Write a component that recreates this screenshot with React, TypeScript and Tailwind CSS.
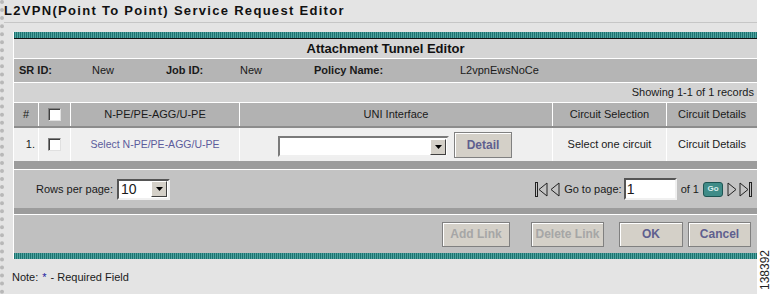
import React from "react";

const teal =
  "h-[6px] bg-[repeating-linear-gradient(90deg,#1d7370_0px,#1d7370_1px,#4fa3a0_1px,#4fa3a0_2px)]";

function Check() {
  return (
    <div className="w-[13px] h-[13px] bg-white border border-t-[#808080] border-l-[#808080] border-b-[#e0e0e0] border-r-[#e0e0e0] shadow-[inset_1px_1px_0_#404040]" />
  );
}

function DropBtn() {
  return (
    <div className="w-[16px] h-[16px] bg-[#d4d0c8] border border-t-white border-l-white border-b-[#404040] border-r-[#404040] flex items-center justify-center">
      <svg width="7" height="4" viewBox="0 0 7 4">
        <path d="M0 0h7L3.5 4z" fill="#000" />
      </svg>
    </div>
  );
}

function Btn({ label, on, w }: { label: string; on?: boolean; w: string }) {
  return (
    <div
      className={`${w} h-[25px] bg-[#d4d0c8] border border-[#808080] shadow-[inset_1px_1px_0_#ffffff] flex items-center justify-center font-bold text-[12px] ${
        on ? "text-[#5f5f8f]" : "text-[#a6a6a6]"
      }`}
    >
      {label}
    </div>
  );
}

function Tri({ dir, bar }: { dir: "l" | "r"; bar?: boolean }) {
  return (
    <svg width={bar ? 13 : 10} height="15" viewBox={bar ? "0 0 13 15" : "0 0 10 15"}>
      {dir === "l" ? (
        <>
          {bar && <rect x="0.5" y="0.5" width="2" height="14" fill="none" stroke="#222" />}
          <path d={bar ? "M12 1L4 7.5l8 6.5z" : "M9 1L1 7.5l8 6.5z"} fill="none" stroke="#222" />
        </>
      ) : (
        <>
          <path d="M1 1l8 6.5-8 6.5z" fill="none" stroke="#222" />
          {bar && <rect x="10.5" y="0.5" width="2" height="14" fill="none" stroke="#222" />}
        </>
      )}
    </svg>
  );
}

export default function App() {
  return (
    <div className="w-[771px] h-[294px] bg-white flex font-['Liberation_Sans',Arial,sans-serif] text-[11px] text-[#1a1a1a] overflow-hidden">
      <div className="w-[757px] h-full bg-[#e4e4e4] border-l-4 border-dotted border-[#b8b8b8] flex flex-col">
        <div className="h-[23px] border-b border-[#c6c6c6] flex items-center font-bold text-[13px] tracking-[1.3px] text-[#111]">
          L2VPN(Point To Point) Service Request Editor
        </div>
        <div className="h-[9px]" />
        <div className="ml-[9px] border-l border-white flex flex-col">
          <div className={teal} />
          <div className="h-[1px] bg-[#111]" />
          <div className="h-[19px] bg-[#d5d5d5] flex items-center justify-center font-bold text-[13px] text-[#111]">
            Attachment Tunnel Editor
          </div>
          <div className="h-[1px] bg-white" />
          <div className="h-[23px] bg-[#b5b5b5] flex items-center pl-[5px]">
            <span className="w-[73px] font-bold">SR ID:</span>
            <span className="w-[74px]">New</span>
            <span className="w-[74px] font-bold">Job ID:</span>
            <span className="w-[74px]">New</span>
            <span className="w-[146px] font-bold">Policy Name:</span>
            <span>L2vpnEwsNoCe</span>
          </div>
          <div className="h-[1px] bg-white" />
          <div className="h-[19px] bg-[#d3d3d3] flex items-center justify-end pr-[3px]">
            Showing 1-1 of 1 records
          </div>
          <div className="h-[1px] bg-white" />
          <div className="grid grid-cols-[25px_32px_169px_313px_114px_1fr] h-[25px] bg-[#b2b2b2] border-b-2 border-[#8c8c8c]">
            <div className="border-r border-white flex items-center justify-center">#</div>
            <div className="border-r border-white flex items-center justify-center">
              <Check />
            </div>
            <div className="border-r border-white flex items-center justify-center">N-PE/PE-AGG/U-PE</div>
            <div className="border-r border-white flex items-center justify-center">UNI Interface</div>
            <div className="border-r border-white flex items-center justify-center">Circuit Selection</div>
            <div className="flex items-center justify-center">Circuit Details</div>
          </div>
          <div className="grid grid-cols-[25px_32px_169px_313px_114px_1fr] h-[33px] bg-[#efefef]">
            <div className="border-r border-white flex items-center justify-end pr-[3px]">1.</div>
            <div className="border-r border-white flex items-center justify-center">
              <Check />
            </div>
            <div className="border-r border-white flex items-center justify-center text-[#5c5c9c] text-[10.5px]">
              Select N-PE/PE-AGG/U-PE
            </div>
            <div className="border-r border-white flex items-center pl-[38px] gap-[5px]">
              <div className="w-[171px] h-[21px] mt-[4px] bg-white border-2 border-t-[#7a7a7a] border-l-[#7a7a7a] border-b-[#f0f0f0] border-r-[#f0f0f0] flex items-center justify-end pr-[1px]">
                <DropBtn />
              </div>
              <Btn label="Detail" on w="w-[58px] h-[26px]" />
            </div>
            <div className="border-r border-white flex items-center justify-center">Select one circuit</div>
            <div className="flex items-center justify-center">Circuit Details</div>
          </div>
          <div className="h-[8px] bg-[#9c9c9c]" />
          <div className="h-[1px] bg-white" />
          <div className="h-[38px] bg-[#c3c3c3] flex items-center pl-[22px] pr-[5px]">
            <span>Rows per page:</span>
            <div className="ml-[4px] w-[53px] h-[21px] bg-white border-2 border-t-[#555] border-l-[#555] border-b-[#f0f0f0] border-r-[#f0f0f0] flex items-center justify-between pl-[2px] pr-[1px] text-[14px]">
              10
              <DropBtn />
            </div>
            <div className="ml-auto flex items-center">
              <Tri dir="l" bar />
              <span className="ml-[2px]"><Tri dir="l" /></span>
              <span className="ml-[4px]">Go to page:</span>
              <div className="ml-[2px] w-[53px] h-[22px] bg-white border-2 border-t-[#555] border-l-[#555] border-b-[#f0f0f0] border-r-[#f0f0f0] flex items-center pl-[1px] text-[14px]">
                1
              </div>
              <span className="ml-[4px]">of 1</span>
              <div className="ml-[4px] w-[20px] h-[15px] rounded-[3px] bg-[#3f8c88] border border-[#1d5553] flex items-center justify-center text-[8px] font-bold text-[#d8eeee]">
                Go
              </div>
              <span className="ml-[4px]"><Tri dir="r" /></span>
              <span className="ml-[2px]"><Tri dir="r" bar /></span>
            </div>
          </div>
          <div className="h-[6px] bg-[#9c9c9c]" />
          <div className="h-[1px] bg-white" />
          <div className="h-[38px] bg-[#c0c0c0] flex items-center justify-end pr-[6px]">
            <Btn label="Add Link" w="w-[68px]" />
            <div className="w-[21px]" />
            <Btn label="Delete Link" w="w-[73px]" />
            <div className="w-[15px]" />
            <Btn label="OK" on w="w-[64px]" />
            <div className="w-[5px]" />
            <Btn label="Cancel" on w="w-[63px]" />
          </div>
          <div className={teal} />
        </div>
        <div className="flex-1 flex items-center pl-[8px] pt-[1px]">
          Note: <span className="mx-[4px] text-[#2020a0]">*</span> - Required Field
        </div>
      </div>
      <div className="flex-1 relative">
        <div className="absolute left-[2px] top-[290px] origin-top-left -rotate-90 text-[12px] text-[#222] leading-[12px]">
          138392
        </div>
      </div>
    </div>
  );
}
